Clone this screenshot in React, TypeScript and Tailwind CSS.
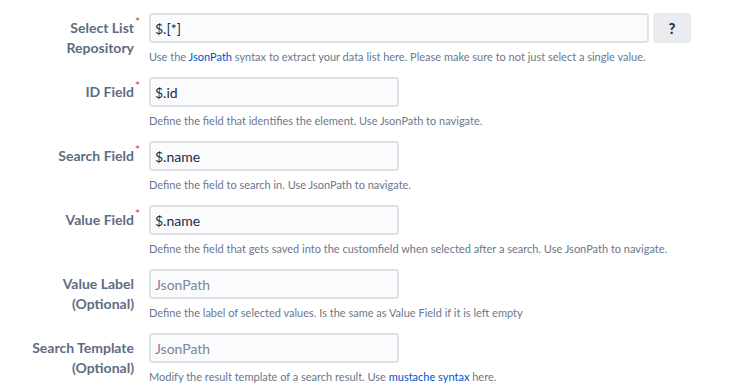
import React from 'react';

interface FieldRow {
  label: string;
  sub?: string;
  required?: boolean;
  value?: string;
  placeholder?: string;
  wide?: boolean;
  help: React.ReactNode;
}

const link = 'text-[#0052cc]';

const rows: FieldRow[] = [
  {
    label: 'Select List',
    sub: 'Repository',
    required: true,
    value: '$.[*]',
    wide: true,
    help: (
      <>
        Use the <span className={link}>JsonPath</span> syntax to extract your data list here. Please make sure to not just select a single value.
      </>
    ),
  },
  {
    label: 'ID Field',
    required: true,
    value: '$.id',
    help: 'Define the field that identifies the element. Use JsonPath to navigate.',
  },
  {
    label: 'Search Field',
    required: true,
    value: '$.name',
    help: 'Define the field to search in. Use JsonPath to navigate.',
  },
  {
    label: 'Value Field',
    required: true,
    value: '$.name',
    help: 'Define the field that gets saved into the customfield when selected after a search. Use JsonPath to navigate.',
  },
  {
    label: 'Value Label',
    sub: '(Optional)',
    placeholder: 'JsonPath',
    help: 'Define the label of selected values. Is the same as Value Field if it is left empty',
  },
  {
    label: 'Search Template',
    sub: '(Optional)',
    placeholder: 'JsonPath',
    help: (
      <>
        Modify the result template of a search result. Use <span className={link}>mustache syntax</span> here.
      </>
    ),
  },
];

const App: React.FC = () => {
  return (
    <div className="min-h-screen w-[752px] h-[388px] overflow-hidden bg-white font-['Lato',sans-serif] pt-[13px]">
      <div className="flex flex-col gap-[13px]">
        {rows.map((r) => (
          <div key={r.label} className="flex">
            <div className="w-[134px] shrink-0 pt-[5px] text-right text-[14px] leading-[20px] font-bold text-[#5e6c84]">
              <div>
                <span className="relative">
                  {r.label}
                  {r.required && (
                    <span className="absolute -right-[6px] -top-[3px] text-[12px] leading-none font-normal text-[#de350b]">*</span>
                  )}
                </span>
              </div>
              {r.sub && <div>{r.sub}</div>}
            </div>
            <div className="ml-[15px] flex flex-col">
              <div className="flex gap-[4px]">
                <div
                  className={`${r.wide ? 'w-[500px]' : 'w-[250px]'} h-[30px] flex items-center px-[4px] rounded-[3px] border-2 border-[#dfe1e6] bg-[#fafbfc] text-[14px] ${r.value ? 'text-[#172b4d]' : 'text-[#7a869a]'}`}
                >
                  {r.value ?? r.placeholder}
                </div>
                {r.wide && (
                  <div className="w-[38px] h-[30px] rounded-[3px] bg-[#ebecf0] flex items-center justify-center text-[15px] font-black text-[#253858]">
                    ?
                  </div>
                )}
              </div>
              <div className="mt-[6px] text-[11px] leading-[15px] text-[#6b778c] whitespace-nowrap">{r.help}</div>
            </div>
          </div>
        ))}
      </div>
    </div>
  );
};

export default App;
